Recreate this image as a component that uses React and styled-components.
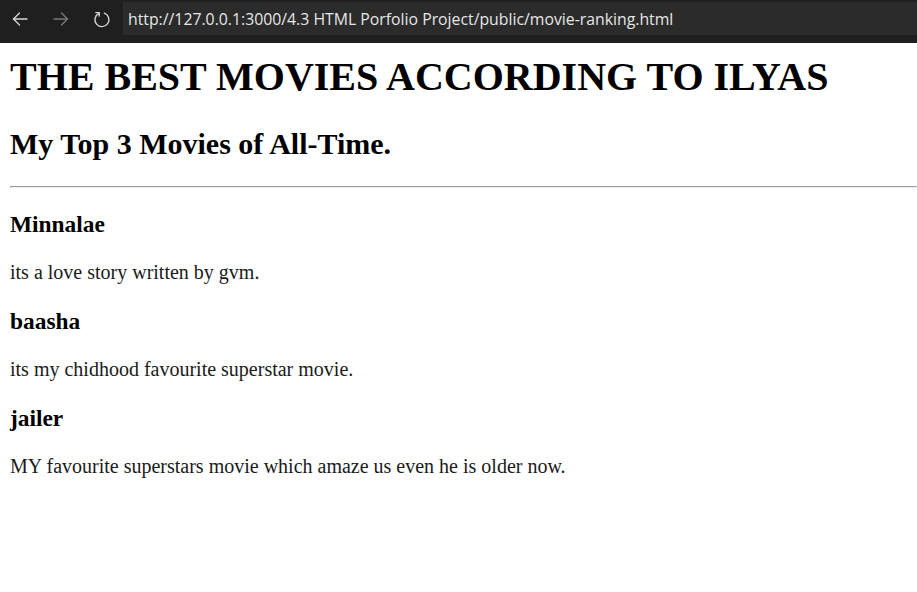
import React from "react";
import styled, { createGlobalStyle } from "styled-components";

const GlobalStyle = createGlobalStyle`
  html, body {
    margin: 0;
    padding: 0;
    background: #fff;
  }
`;

const movies = [
  { title: "Minnalae", text: "its a love story written by gvm." },
  { title: "baasha", text: "its my chidhood favourite superstar movie." },
  { title: "jailer", text: "MY favourite superstars movie which amaze us even he is older now." },
];

const BackIcon = () => (
  <svg width="18" height="18" viewBox="0 0 18 18" fill="none" stroke="currentColor" strokeWidth="1.3" strokeLinecap="round" strokeLinejoin="round">
    <path d="M16 9H2.5" />
    <path d="M8.5 3L2.5 9l6 6" />
  </svg>
);

const ForwardIcon = () => (
  <svg width="18" height="18" viewBox="0 0 18 18" fill="none" stroke="currentColor" strokeWidth="1.3" strokeLinecap="round" strokeLinejoin="round">
    <path d="M2 9h13.5" />
    <path d="M9.5 3l6 6-6 6" />
  </svg>
);

const ReloadIcon = () => (
  <svg width="18" height="18" viewBox="0 0 18 18" fill="none" stroke="currentColor" strokeWidth="1.4" strokeLinecap="round" strokeLinejoin="round">
    <path d="M11.4 3.1A7 7 0 1 1 6 3.3" />
    <path d="M2.8 2.6H6.2V6" />
  </svg>
);

const App = () => {
  return (
    <>
      <GlobalStyle />
      <Toolbar>
        <NavButton>
          <BackIcon />
        </NavButton>
        <NavButton dim>
          <ForwardIcon />
        </NavButton>
        <NavButton>
          <ReloadIcon />
        </NavButton>
        <AddressField>http://127.0.0.1:3000/4.3 HTML Porfolio Project/public/movie-ranking.html</AddressField>
      </Toolbar>

      <Page>
        <Title>THE BEST MOVIES ACCORDING TO ILYAS</Title>
        <Subtitle>My Top 3 Movies of All-Time.</Subtitle>
        <Rule />
        {movies.map((movie) => (
          <section key={movie.title}>
            <MovieTitle>{movie.title}</MovieTitle>
            <MovieText>{movie.text}</MovieText>
          </section>
        ))}
      </Page>
    </>
  );
};

const Toolbar = styled.div`
  display: flex;
  align-items: flex-start;
  gap: 1px;
  height: 43px;
  padding-top: 2px;
  box-sizing: border-box;
  background: #1f1f1f;
`;

const NavButton = styled.div`
  width: 40px;
  height: 33px;
  display: flex;
  align-items: center;
  justify-content: center;
  color: ${(props) => (props.dim ? "#7a7a7a" : "#d6d6d6")};
`;

const AddressField = styled.div`
  flex: 1;
  height: 33px;
  display: flex;
  align-items: center;
  padding-left: 5px;
  background: #2b2b2b;
  color: #e6e6e6;
  font-family: "Open Sans", "Noto Sans", sans-serif;
  font-size: 15.8px;
  white-space: nowrap;
`;

const Page = styled.div`
  padding: 10px 0 0 10px;
  font-family: "Liberation Serif", "Times New Roman", serif;
  color: #000;
`;

const Title = styled.h1`
  margin: 0 0 26.8px;
  font-size: 40px;
  font-weight: bold;
`;

const Subtitle = styled.h2`
  margin: 24.9px 0;
  font-size: 30px;
  font-weight: bold;
`;

const Rule = styled.hr`
  margin: 10px 0;
  border: 1px inset;
  color: gray;
`;

const MovieTitle = styled.h3`
  margin: 23.4px 0;
  font-size: 23.4px;
  font-weight: bold;
`;

const MovieText = styled.p`
  margin: 20px 0;
  font-size: 20px;
  color: #1a1a1a;
`;

export default App;
